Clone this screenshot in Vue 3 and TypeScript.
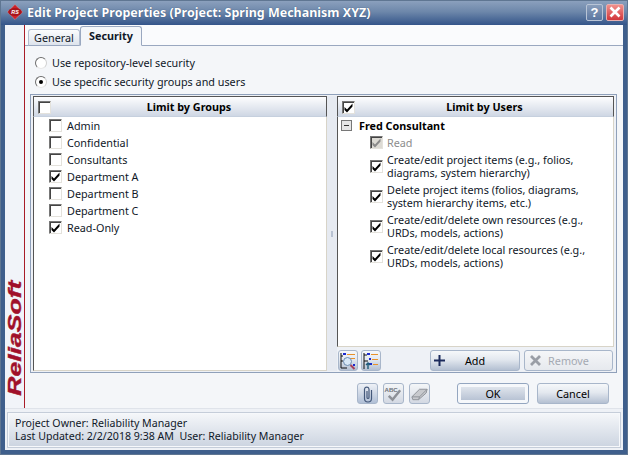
<template>
  <div class="window">
    <div class="titlebar">
      <svg class="logo" width="16" height="16" viewBox="0 0 18 18">
        <path d="M9 0.5 L17.5 9 L9 17.5 L0.5 9 Z" fill="#cc2229" stroke="#e8a0a0" stroke-width="0.5" />
        <ellipse cx="9" cy="9" rx="7.5" ry="4.5" fill="#a8141c" />
        <text x="9" y="11.5" text-anchor="middle" class="logo-text">RS</text>
      </svg>
      <span class="title">Edit Project Properties (Project: Spring Mechanism XYZ)</span>
      <div class="caption-btn help">?</div>
      <div class="caption-btn close">
        <svg width="12" height="12" viewBox="0 0 12 12">
          <path d="M1.5 1.5 L10.5 10.5 M10.5 1.5 L1.5 10.5" stroke="#fff" stroke-width="2.6" />
        </svg>
      </div>
    </div>

    <div class="client">
      <div class="middle">
        <div class="brand"><span>ReliaSoft</span></div>
        <div class="content">
          <div class="tabs">
            <div class="tab">General</div>
            <div class="tab active">Security</div>
          </div>

          <div class="page">
            <div class="radios">
              <label class="radio"><i class="dot"></i>Use repository-level security</label>
              <label class="radio"><i class="dot on"></i>Use specific security groups and users</label>
            </div>

            <div class="split">
              <div class="pane left-pane">
                <div class="head">
                  <span class="check head-check"></span>
                  <b>Limit by Groups</b>
                </div>
                <div class="list">
                  <div v-for="g in groups" :key="g.name" class="group-row">
                    <span class="check" :class="{ checked: g.on }">
                      <svg v-if="g.on" width="11" height="11" viewBox="0 0 11 11"><path :d="tick" /></svg>
                    </span>
                    {{ g.name }}
                  </div>
                </div>
              </div>

              <div class="splitter"><i></i></div>

              <div class="pane right-pane">
                <div class="head">
                  <span class="check head-check checked">
                    <svg width="11" height="11" viewBox="0 0 11 11"><path :d="tick" /></svg>
                  </span>
                  <b>Limit by Users</b>
                </div>
                <div class="list">
                  <div class="user"><span class="minus"></span><b>Fred Consultant</b></div>
                  <div class="perm read">
                    <span class="check checked disabled">
                      <svg width="11" height="11" viewBox="0 0 11 11"><path :d="tick" /></svg>
                    </span>
                    Read
                  </div>
                  <div v-for="p in perms" :key="p" class="perm">
                    <span class="check checked">
                      <svg width="11" height="11" viewBox="0 0 11 11"><path :d="tick" /></svg>
                    </span>
                    <span class="perm-text">{{ p }}</span>
                  </div>
                </div>
                <div class="list-tools">
                  <button class="btn icon">
                    <svg width="18" height="18" viewBox="0 0 18 18">
                      <path d="M2 1 V16 H8" fill="none" stroke="#111" />
                      <path d="M2 4 H4 M2 9 H4" stroke="#111" />
                      <rect x="4" y="1" width="3" height="2" fill="#1c2bd0" />
                      <path d="M8 2.5 H16 M11 6.5 H16" stroke="#e8912a" />
                      <circle cx="8.5" cy="9.5" r="4" fill="#d8e8f6" stroke="#6c8cb0" />
                      <path d="M11.5 13 L15.5 17" stroke="#a8405c" stroke-width="2" />
                      <rect x="14" y="12" width="2" height="2" fill="#1c2bd0" />
                    </svg>
                  </button>
                  <button class="btn icon">
                    <svg width="18" height="18" viewBox="0 0 18 18">
                      <path d="M2 1 V17" stroke="#111" />
                      <path d="M2 3 H5 M2 9 H6" stroke="#111" />
                      <path d="M9 2.5 H16 M10 7.5 H16 M11 12.5 H16" stroke="#e8912a" />
                      <rect x="5" y="1" width="3" height="2" fill="#1c2bd0" />
                      <rect x="7" y="6" width="2" height="2" fill="#1c2bd0" />
                      <rect x="7" y="11" width="3" height="2" fill="#1c2bd0" />
                      <path d="M6 17 V11 M4 13 L6 11 L8 13" fill="none" stroke="#1f5a78" stroke-width="1.4" />
                    </svg>
                  </button>
                  <span class="grow"></span>
                  <button class="btn wide">
                    <svg class="btn-glyph" width="11" height="11" viewBox="0 0 11 11">
                      <path d="M5.5 0 V11 M0 5.5 H11" stroke="#1b2a5c" stroke-width="2" />
                    </svg>
                    Add
                  </button>
                  <button class="btn wide off">
                    <svg class="btn-glyph" width="11" height="11" viewBox="0 0 11 11">
                      <path d="M1 1 L10 10 M10 1 L1 10" stroke="#9a9ea6" stroke-width="2.8" />
                    </svg>
                    Remove
                  </button>
                </div>
              </div>
            </div>

            <div class="actions">
              <button class="btn tool clip">
                <svg width="14" height="18" viewBox="0 0 14 18">
                  <path d="M10.5 5 V13.5 A3.5 3.5 0 0 1 3.5 13.5 V4 A2.3 2.3 0 0 1 8 4 V12.5 A1 1 0 0 1 6 12.5 V6" fill="none" stroke="#44587a" stroke-width="1.2" />
                </svg>
              </button>
              <button class="btn tool">
                <svg width="20" height="18" viewBox="0 0 20 18">
                  <text x="0.5" y="6.5" class="abc">ABC</text>
                  <path d="M5 11 L9 15 L17 5" fill="none" stroke="#8d9198" stroke-width="2.6" />
                </svg>
              </button>
              <button class="btn tool">
                <svg width="20" height="16" viewBox="0 0 20 16">
                  <path d="M2 11 L10 3 H18 L17 7 L9 14 H3 Z" fill="#c8cace" stroke="#8d9198" />
                  <path d="M2 11 H10 L18 3 M10 11 L9 14" fill="none" stroke="#8d9198" />
                </svg>
              </button>
              <button class="btn main-btn ok"><span>OK</span></button>
              <button class="btn main-btn">Cancel</button>
            </div>
          </div>
        </div>
      </div>

      <div class="status">
        <div class="status-inner">
          Project Owner: Reliability Manager<br />
          Last Updated: 2/2/2018 9:38 AM &nbsp;User: Reliability Manager
        </div>
      </div>
    </div>
  </div>
</template>

<script setup lang="ts">
const tick = 'M1.5 5 L4 7.5 L9.5 1.5 V4.5 L4 10.5 L1.5 8 Z'

const groups = [
  { name: 'Admin', on: false },
  { name: 'Confidential', on: false },
  { name: 'Consultants', on: false },
  { name: 'Department A', on: true },
  { name: 'Department B', on: false },
  { name: 'Department C', on: false },
  { name: 'Read-Only', on: true }
]

const perms = [
  'Create/edit project items (e.g., folios, diagrams, system hierarchy)',
  'Delete project items (folios, diagrams, system hierarchy items, etc.)',
  'Create/edit/delete own resources (e.g., URDs, models, actions)',
  'Create/edit/delete local resources (e.g., URDs, models, actions)'
]
</script>

<style>
html,
body {
  margin: 0;
  overflow: hidden;
}
</style>

<style scoped>
.window {
  width: 628px;
  height: 455px;
  box-sizing: border-box;
  display: flex;
  flex-direction: column;
  background: #3f5f8c;
  border: 1px solid #5f7692;
  font-family: "Noto Sans", "DejaVu Sans", sans-serif;
  font-size: 10.8px;
  color: #101828;
}
.titlebar {
  height: 24px;
  flex: none;
  display: flex;
  align-items: center;
  padding: 0 3px 2px 6px;
  box-sizing: border-box;
  gap: 3px;
  background: linear-gradient(#8ba0bd, #6d87aa 45%, #34558a);
}
.logo-text {
  font: italic bold 6px "Liberation Sans", sans-serif;
  fill: #fff;
}
.title {
  flex: 1;
  margin-left: 1px;
  color: #fff;
  font-weight: 700;
  font-size: 12.5px;
  font-family: "Noto Sans", sans-serif;
  text-shadow: 0 0 1px #24406a;
}
.caption-btn {
  width: 15px;
  height: 15px;
  border: 1px solid #b8c4d6;
  border-radius: 2px;
  display: flex;
  align-items: center;
  justify-content: center;
  color: #fff;
  font-weight: 700;
  font-size: 13px;
  font-family: "Liberation Sans", sans-serif;
}
.help {
  background: linear-gradient(#8a9ebb, #5b76a0);
}
.close {
  width: 16px;
  background: linear-gradient(#f0908c, #d2363a);
  border-color: #e8b0b0;
}
.client {
  flex: 1;
  min-height: 0;
  margin: 0 4px 4px;
  display: flex;
  flex-direction: column;
  background: #f4f6f9;
}
.middle {
  flex: 1;
  min-height: 0;
  display: flex;
}
.brand {
  flex: none;
  box-sizing: border-box;
  width: 20px;
  border-right: 1px solid #a81c28;
  background: #f1f4f9;
  display: flex;
  align-items: flex-end;
  justify-content: center;
}
.brand span {
  writing-mode: vertical-rl;
  transform: rotate(180deg) scaleY(1.4);
  margin-bottom: 29px;
  font: italic 700 19px/18px "Liberation Sans", sans-serif;
  -webkit-text-stroke: 0.4px #a0102a;
  color: #a0102a;
  white-space: nowrap;
}
.content {
  flex: 1;
  min-width: 0;
  display: flex;
  flex-direction: column;
}
.tabs {
  height: 21px;
  flex: none;
  box-sizing: border-box;
  display: flex;
  align-items: flex-end;
  padding-left: 3px;
  background: #fafbfd;
  border-bottom: 1px solid #9aa8c0;
}
.tab {
  height: 17px;
  width: 52px;
  box-sizing: border-box;
  margin-bottom: -1px;
  text-align: center;
  line-height: 16px;
  border: 1px solid #b2bdd0;
  border-bottom: 1px solid #9aa8c0;
  border-radius: 3px 3px 0 0;
  background: linear-gradient(#fbfcfd, #dde3ec);
}
.tab.active {
  height: 20px;
  width: 62px;
  line-height: 18px;
  font-weight: 700;
  background: #f4f6f9;
  border-color: #9aa8c0;
  border-bottom-color: #f4f6f9;
}
.page {
  flex: 1;
  min-height: 0;
  display: flex;
  flex-direction: column;
  padding: 0 6px 0 5px;
}
.radios {
  height: 48px;
  flex: none;
  box-sizing: border-box;
  padding: 7px 0 0 5px;
}
.radio {
  height: 19px;
  display: flex;
  align-items: center;
  gap: 5px;
}
.dot {
  width: 10px;
  height: 10px;
  border: 1px solid #6c6c6c;
  border-color: #6c6c6c #d0d0d0 #e8e8e8 #6c6c6c;
  border-radius: 50%;
  background: #fff;
  position: relative;
}
.dot.on::after {
  content: "";
  position: absolute;
  left: 3px;
  top: 3px;
  width: 4px;
  height: 4px;
  border-radius: 50%;
  background: #000;
}
.split {
  height: 279px;
  flex: none;
  box-sizing: border-box;
  display: flex;
  padding: 1px 2px 1px;
  border: 1px solid #8fa0ba;
  background: #eef1f6;
}
.pane {
  display: flex;
  flex-direction: column;
  min-width: 0;
}
.left-pane {
  width: 294px;
  flex: none;
}
.right-pane {
  flex: 1;
}
.splitter {
  width: 10px;
  flex: none;
  display: flex;
  align-items: center;
  justify-content: center;
  background: #e6eaf1;
}
.splitter i {
  width: 2px;
  height: 6px;
  background: #b8c2d2;
}
.head {
  height: 21px;
  flex: none;
  box-sizing: border-box;
  position: relative;
  display: flex;
  align-items: center;
  justify-content: center;
  padding-left: 18px;
  border: 1px solid #555;
  border-bottom: 1px solid #c6d0de;
  background: linear-gradient(#fdfdfe, #cfd7e4);
  color: #000;
}
.head-check {
  position: absolute;
  left: 4px;
  top: 4px;
}
.list {
  flex: 1;
  min-height: 0;
  background: #fff;
  border-left: 1px solid #555;
  border-right: 1px solid #d8d4c8;
  border-bottom: 1px solid #d8d4c8;
}
.group-row {
  height: 17px;
  display: flex;
  align-items: center;
  gap: 5px;
  padding-left: 15px;
}
.check {
  width: 13px;
  height: 13px;
  flex: none;
  box-sizing: border-box;
  background: #fff;
  border: 1px solid;
  border-color: #777 #e4e2dc #e4e2dc #777;
  box-shadow: inset 1px 1px 0 #444;
  display: inline-flex;
  align-items: center;
  justify-content: center;
}
.check svg {
  fill: #000;
}
.check.disabled {
  background: #dcdad4;
}
.check.disabled svg {
  fill: #8a8a8a;
}
.user {
  height: 17px;
  display: flex;
  align-items: center;
  gap: 7px;
  padding-left: 3px;
  color: #000;
}
.minus {
  width: 9px;
  height: 9px;
  background: linear-gradient(#333, #333) center / 5px 1px no-repeat, #e6e6e6;
  border: 1px solid #777;
}
.perm {
  min-height: 30px;
  display: flex;
  align-items: center;
  gap: 4px;
  padding-left: 32px;
  line-height: 13px;
}
.perm.read {
  min-height: 17px;
  color: #8c8c8c;
}
.perm-text {
  width: 225px;
}
.list-tools {
  height: 24px;
  flex: none;
  display: flex;
  align-items: flex-end;
  gap: 3px;
  background: #eef1f6;
}
.grow {
  flex: 1;
}
.btn {
  height: 21px;
  box-sizing: border-box;
  padding: 0;
  border: 1px solid #a8b6ca;
  border-radius: 3px;
  background: linear-gradient(#f6f8fa, #e3e8ef 45%, #b4c0d2);
  font: inherit;
  color: #000;
  display: inline-flex;
  align-items: center;
  justify-content: center;
  position: relative;
}
.icon {
  width: 20px;
}
.icon:first-child {
  margin-left: 1px;
}
.wide {
  width: 90px;
  margin-left: 1px;
}
.wide.off {
  width: 89px;
  color: #a4a9b2;
  margin-right: 1px;
  background: linear-gradient(#f5f6f8, #e6e9ee);
}
.btn-glyph {
  position: absolute;
  left: 3px;
  top: 4px;
}
.off .btn-glyph {
  left: 5px;
}
.actions {
  height: 35px;
  flex: none;
  display: flex;
  align-items: flex-start;
  justify-content: flex-end;
  padding: 10px 8px 0 0;
  box-sizing: border-box;
}
.tool {
  width: 21px;
  margin-right: 5px;
  background: linear-gradient(#f4f6f8, #d3d9e3);
}
.tool.clip {
  background: linear-gradient(#eef1f6, #b0bfd6);
}
.abc {
  font: 700 6.5px "Liberation Sans", sans-serif;
  fill: #6f737a;
}
.main-btn {
  width: 72px;
  margin-left: 8px;
}
.tool + .main-btn {
  margin-left: 22px;
}
.ok {
  padding: 3px;
  border-color: #94a6c0;
  background: #f6f8fb;
}
.ok span {
  width: 100%;
  height: 100%;
  display: flex;
  align-items: center;
  justify-content: center;
  background: linear-gradient(#dfe4ec, #b8c3d4);
}
.status {
  height: 42px;
  flex: none;
  box-sizing: border-box;
  padding: 4px 3px 3px;
  background: #eef1f6;
  border-top: 1px solid #dfe3ea;
  font-size: 10.6px;
}
.status-inner {
  height: 100%;
  box-sizing: border-box;
  padding: 3px 6px;
  line-height: 13px;
  border: 1px solid #f6f8fb;
  outline: 1px solid #c5cdd9;
  background: linear-gradient(#f4f6f9, #cdd5e1);
  color: #101828;
}
</style>
